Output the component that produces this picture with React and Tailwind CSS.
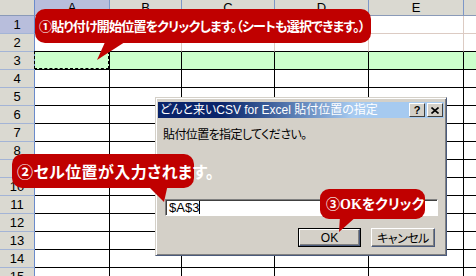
import React from "react";

const cols = [
  { label: "A", w: "w-[75px]", active: true },
  { label: "B", w: "w-[72px]" },
  { label: "C", w: "w-[93px]" },
  { label: "D", w: "w-[94px]" },
  { label: "E", w: "w-[95px]" },
  { label: "", w: "w-[60px]" },
];

const rows = Array.from({ length: 15 }, (_, i) => i + 1);

const jp = "font-['Noto_Sans_CJK_JP',sans-serif] [font-feature-settings:'palt']";
const ui = "font-['Liberation_Sans','Noto_Sans_CJK_JP',sans-serif]";

function HeaderRow() {
  return (
    <div className={`flex h-[16px] ${ui} text-[13px] text-black`}>
      <div className="w-[35px] shrink-0 bg-[#dad9d1] border-r border-b border-r-[#6a8bcb] border-b-[#8a9ab8]" />
      {cols.map((c, i) => (
        <div
          key={i}
          className={`${c.w} shrink-0 flex items-center justify-center leading-none border-r border-b border-r-[#7d97c7] border-b-[#8a9ab8] ${
            c.active ? "bg-[#b8bedc]" : "bg-[#dad9d1]"
          }`}
        >
          {c.label}
        </div>
      ))}
    </div>
  );
}

function Row({ n }) {
  const light = n <= 2;
  const bottomLight = n === 1;
  return (
    <div className="flex h-[18px]">
      <div
        className={`w-[35px] shrink-0 flex items-center justify-center ${ui} text-[13px] leading-none text-black border-r border-b border-r-[#6a8bcb] border-b-[#a3b4d6] ${
          n === 1 ? "bg-[#b8bedc]" : "bg-[#dad9d1]"
        }`}
      >
        {n}
      </div>
      {cols.map((c, i) => (
        <div
          key={i}
          className={`${c.w} shrink-0 relative border-r border-b ${
            light ? "border-r-[#dccbc3]" : "border-r-black"
          } ${bottomLight ? "border-b-[#dccbc3]" : "border-b-black"} ${
            n === 3 ? "bg-[#ccffcc]" : "bg-white"
          }`}
        >
          {n === 3 && i === 0 && (
            <div className="absolute -left-px -top-px w-[75px] h-[18px] border border-dashed border-black" />
          )}
        </div>
      ))}
    </div>
  );
}

function Dialog() {
  return (
    <div className="absolute left-[155px] top-[97px] w-[292px] h-[159px] bg-[#d4d0c8] border border-t-[#d4d0c8] border-l-[#d4d0c8] border-r-[#4a5a7c] border-b-[#4a5a7c] shadow-[inset_1px_1px_0_#ffffff,inset_-1px_-1px_0_#808080] p-[2px]">
      <div className="mt-[2px] h-[16px] flex items-center justify-between pl-[2px] pr-[1px] bg-linear-to-r from-[#0a246a] from-[22%] to-[#a6caf0] to-[68%]">
        <span className={`${ui} [font-feature-settings:'palt'] text-[12px] leading-none text-white whitespace-nowrap`}>
          どんと来いCSV for Excel 貼付位置の指定
        </span>
        <div className="flex gap-[2px]">
          <div className="w-[16px] h-[14px] flex items-center justify-center bg-[#d4d0c8] border border-t-white border-l-white border-r-[#404040] border-b-[#404040] text-[11px] font-bold leading-none text-black font-['Liberation_Sans',sans-serif]">
            ?
          </div>
          <div className="w-[16px] h-[14px] flex items-center justify-center bg-[#d4d0c8] border border-t-white border-l-white border-r-[#404040] border-b-[#404040]">
            <svg width="8" height="7" viewBox="0 0 8 7">
              <path d="M0.5 0.5 L7.5 6.5 M7.5 0.5 L0.5 6.5" stroke="black" strokeWidth="1.6" />
            </svg>
          </div>
        </div>
      </div>
      <div className={`mt-[8px] ml-[5px] ${jp} text-[12px] tracking-[-0.6px] leading-[16px] text-black`}>
        貼付位置を指定してください。
      </div>
      <div className="mt-[57px] ml-[7px] w-[273px] h-[17px] bg-white border border-t-[#808080] border-l-[#808080] border-r-white border-b-white shadow-[inset_1px_1px_0_#404040] flex items-center pl-[3px]">
        <span className={`${ui} text-[13px] leading-none text-black`}>$A$3</span>
        <span className="w-px h-[13px] bg-black" />
      </div>
      <div className="mt-[12px] flex justify-end gap-[10px] pr-[9px]">
        <div className="w-[63px] h-[19px] border border-black">
          <div className={`w-full h-full flex items-center justify-center bg-[#d4d0c8] border border-t-white border-l-white border-r-[#4a5a7c] border-b-[#4a5a7c] shadow-[inset_-1px_-1px_0_#808080] ${ui} text-[12px] leading-none text-black`}>
            OK
          </div>
        </div>
        <div className={`w-[64px] h-[19px] flex items-center justify-center bg-[#d4d0c8] border border-t-white border-l-white border-r-[#4a5a7c] border-b-[#4a5a7c] shadow-[inset_-1px_-1px_0_#808080] ${jp} text-[12px] tracking-[-0.5px] leading-none text-black`}>
          キャンセル
        </div>
      </div>
    </div>
  );
}

export default function App() {
  return (
    <div className="relative w-[476px] h-[276px] overflow-hidden bg-white">
      <div className="flex flex-col">
        <HeaderRow />
        {rows.map((n) => (
          <Row key={n} n={n} />
        ))}
      </div>

      <Dialog />

      <svg className="absolute left-0 top-0 pointer-events-none" width="476" height="276">
        <polygon points="106,40 128,40 97,60" fill="#c00000" />
        <polygon points="146,184 168,184 164,202" fill="#c00000" />
        <polygon points="340,216 357,216 339,232" fill="#c00000" />
      </svg>

      <div className={`absolute left-[35px] top-[9px] w-[336px] h-[34px] rounded-[10px] bg-[#c00000] flex items-center pl-[4px] ${jp} text-[13px] tracking-[-0.8px] font-bold text-white whitespace-nowrap`}>
        ①貼り付け開始位置をクリックします。（シートも選択できます。）
      </div>
      <div className={`absolute left-[12px] top-[154px] w-[182px] h-[34px] rounded-[10px] bg-[#c00000] flex items-center pl-[5px] ${jp} text-[16px] tracking-[0.4px] font-bold text-white whitespace-nowrap`}>
        ②セル位置が入力されます。
      </div>
      <div className="absolute left-[320px] top-[189px] w-[105px] h-[30px] rounded-[9px] bg-[#c00000] flex items-center pl-[6px] font-['Liberation_Serif','Noto_Sans_CJK_JP',serif] [font-feature-settings:'palt'] text-[14px] font-bold text-white whitespace-nowrap">
        ③OKをクリック
      </div>
    </div>
  );
}
